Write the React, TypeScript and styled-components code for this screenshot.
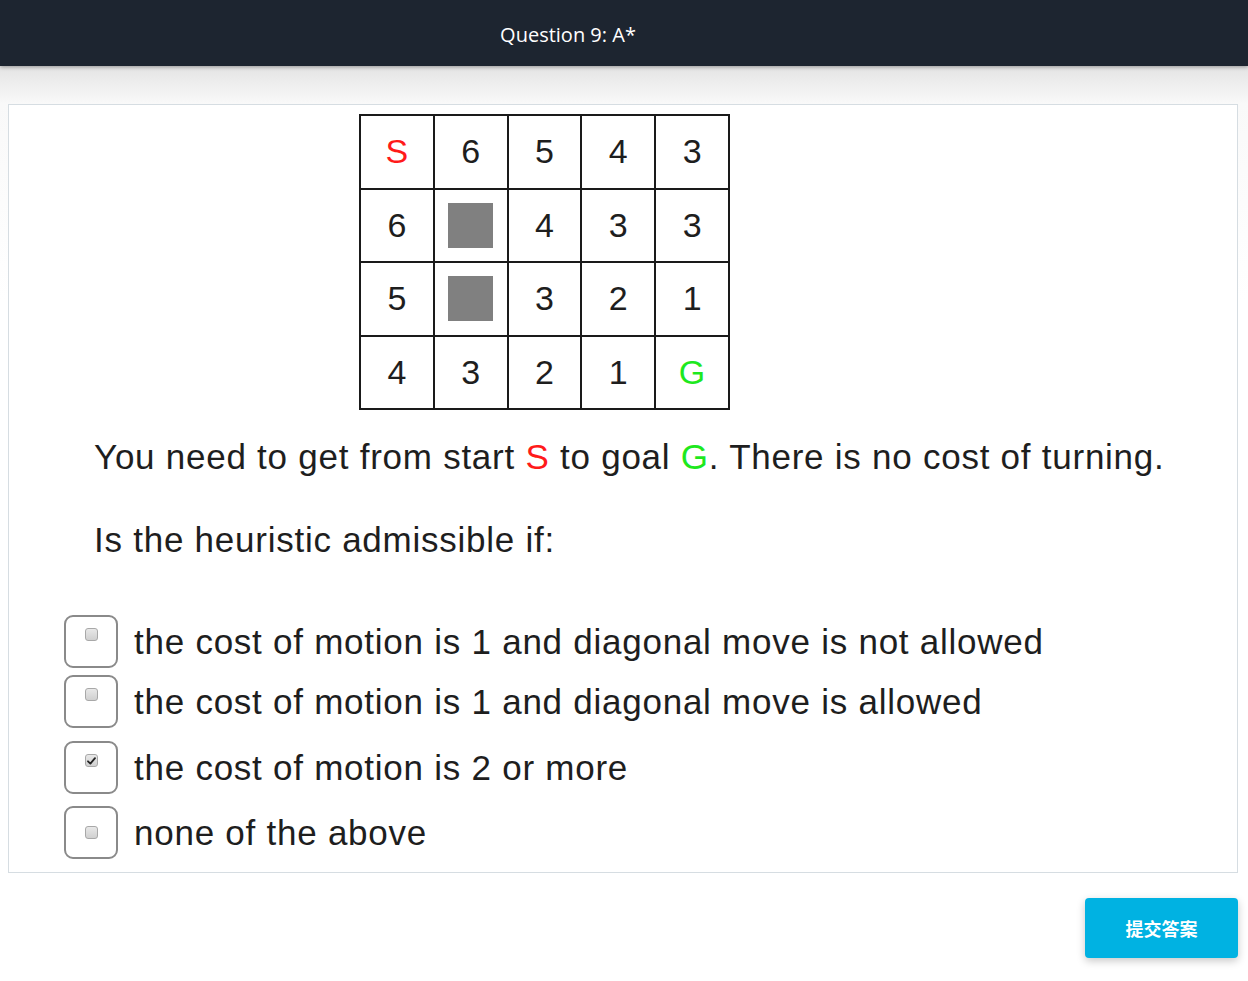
import React from "react";
import styled, { createGlobalStyle } from "styled-components";

const Global = createGlobalStyle`
  html, body { margin: 0; padding: 0; }
  body {
    background: linear-gradient(#e4e4e4 66px, #f9f9f9 104px, #ffffff 300px);
    min-height: 981px;
    font-family: "Liberation Sans", Arial, sans-serif;
  }
`;

const Header = styled.header`
  height: 66px;
  background: #1d2530;
  display: flex;
  align-items: center;
  justify-content: center;
  padding-right: 112px;
  box-shadow: 0 1px 4px rgba(0, 0, 0, 0.35);
  position: relative;
`;

const Title = styled.h1`
  margin: 0;
  font-family: "Open Sans", sans-serif;
  font-weight: 400;
  font-size: 20px;
  color: #ffffff;
  padding-top: 2px;
`;

const Page = styled.main`
  padding: 38px 10px 0 8px;
`;

const Card = styled.section`
  background: #ffffff;
  border: 1px solid #d6dde2;
  height: 769px;
  box-sizing: border-box;
  padding: 9px 0 0 0;
`;

const Grid = styled.div`
  display: grid;
  grid-template-columns: repeat(5, 71.8px);
  grid-auto-rows: 71.6px;
  gap: 2px;
  background: #1a1a1a;
  border: 2px solid #1a1a1a;
  width: max-content;
  margin-left: 350px;
`;

const Cell = styled.div<{ $color?: string }>`
  background: #ffffff;
  display: flex;
  align-items: center;
  justify-content: center;
  font-family: "Liberation Sans", Arial, sans-serif;
  font-size: 34px;
  color: ${(p) => p.$color || "#1e1e1e"};
`;

const Block = styled.div`
  width: 45px;
  height: 45px;
  background: #808080;
`;

const Prompt = styled.p`
  margin: 0;
  padding-left: 85px;
  font-size: 35px;
  letter-spacing: 0.75px;
  color: #1e1e1e;
  line-height: 40px;
`;

const FirstPrompt = styled(Prompt)`
  margin-top: 27px;
`;

const SecondPrompt = styled(Prompt)`
  margin-top: 43px;
`;

const Colored = styled.span<{ $color: string }>`
  color: ${(p) => p.$color};
`;

const Options = styled.div`
  margin-top: 55px;
  padding-left: 55px;
  display: flex;
  flex-direction: column;
`;

const Option = styled.label<{ $gap: number }>`
  display: flex;
  align-items: center;
  gap: 16px;
  margin-top: ${(p) => p.$gap}px;
  cursor: pointer;
`;

const Box = styled.span<{ $center?: boolean }>`
  width: 54px;
  height: 53px;
  box-sizing: border-box;
  border: 2.5px solid #8a8a8a;
  border-radius: 9px;
  display: flex;
  justify-content: center;
  align-items: ${(p) => (p.$center ? "center" : "flex-start")};
  padding-top: ${(p) => (p.$center ? "0" : "11px")};
  flex-shrink: 0;
`;

const Tick = styled.span`
  width: 13px;
  height: 13px;
  box-sizing: border-box;
  border: 1px solid #a8a8a8;
  border-radius: 3px;
  background: linear-gradient(#e8e8e8, #d0d0d0);
  display: flex;
  align-items: center;
  justify-content: center;
`;

const OptionText = styled.span`
  font-size: 35px;
  letter-spacing: 0.75px;
  color: #1e1e1e;
  line-height: 40px;
`;

const Footer = styled.div`
  display: flex;
  justify-content: flex-end;
  padding: 25px 0 0 0;
`;

const Submit = styled.button`
  width: 153px;
  height: 60px;
  border: none;
  border-radius: 4px;
  background: #00b2e2;
  color: #ffffff;
  font-family: "Noto Sans CJK SC", sans-serif;
  font-weight: 700;
  font-size: 18px;
  box-shadow: 0 3px 8px rgba(0, 0, 0, 0.22);
  cursor: pointer;
`;

type C = { v?: string; color?: string; block?: boolean };
const rows: C[][] = [
  [{ v: "S", color: "#ff1a1a" }, { v: "6" }, { v: "5" }, { v: "4" }, { v: "3" }],
  [{ v: "6" }, { block: true }, { v: "4" }, { v: "3" }, { v: "3" }],
  [{ v: "5" }, { block: true }, { v: "3" }, { v: "2" }, { v: "1" }],
  [{ v: "4" }, { v: "3" }, { v: "2" }, { v: "1" }, { v: "G", color: "#1ee81e" }],
];

const options = [
  { text: "the cost of motion is 1 and diagonal move is not allowed", checked: false, gap: 0, center: false },
  { text: "the cost of motion is 1 and diagonal move is allowed", checked: false, gap: 7, center: false },
  { text: "the cost of motion is 2 or more", checked: true, gap: 13, center: false },
  { text: "none of the above", checked: false, gap: 12, center: true },
];

const Check = () => (
  <svg width="9" height="8" viewBox="0 0 9 8">
    <path d="M1 4.3 L3.4 6.6 L8 1.2" fill="none" stroke="#222" strokeWidth="1.8" strokeLinecap="round" strokeLinejoin="round" />
  </svg>
);

export default function App() {
  return (
    <>
      <Global />
      <Header>
        <Title>Question 9: A*</Title>
      </Header>
      <Page>
        <Card>
          <Grid>
            {rows.flat().map((c, i) => (
              <Cell key={i} $color={c.color}>
                {c.block ? <Block /> : c.v}
              </Cell>
            ))}
          </Grid>
          <FirstPrompt>
            You need to get from start <Colored $color="#ff1a1a">S</Colored> to goal{" "}
            <Colored $color="#1ee81e">G</Colored>. There is no cost of turning.
          </FirstPrompt>
          <SecondPrompt>Is the heuristic admissible if:</SecondPrompt>
          <Options>
            {options.map((o, i) => (
              <Option key={i} $gap={o.gap}>
                <Box $center={o.center}>
                  <Tick>{o.checked && <Check />}</Tick>
                </Box>
                <OptionText>{o.text}</OptionText>
              </Option>
            ))}
          </Options>
        </Card>
        <Footer>
          <Submit>提交答案</Submit>
        </Footer>
      </Page>
    </>
  );
}
